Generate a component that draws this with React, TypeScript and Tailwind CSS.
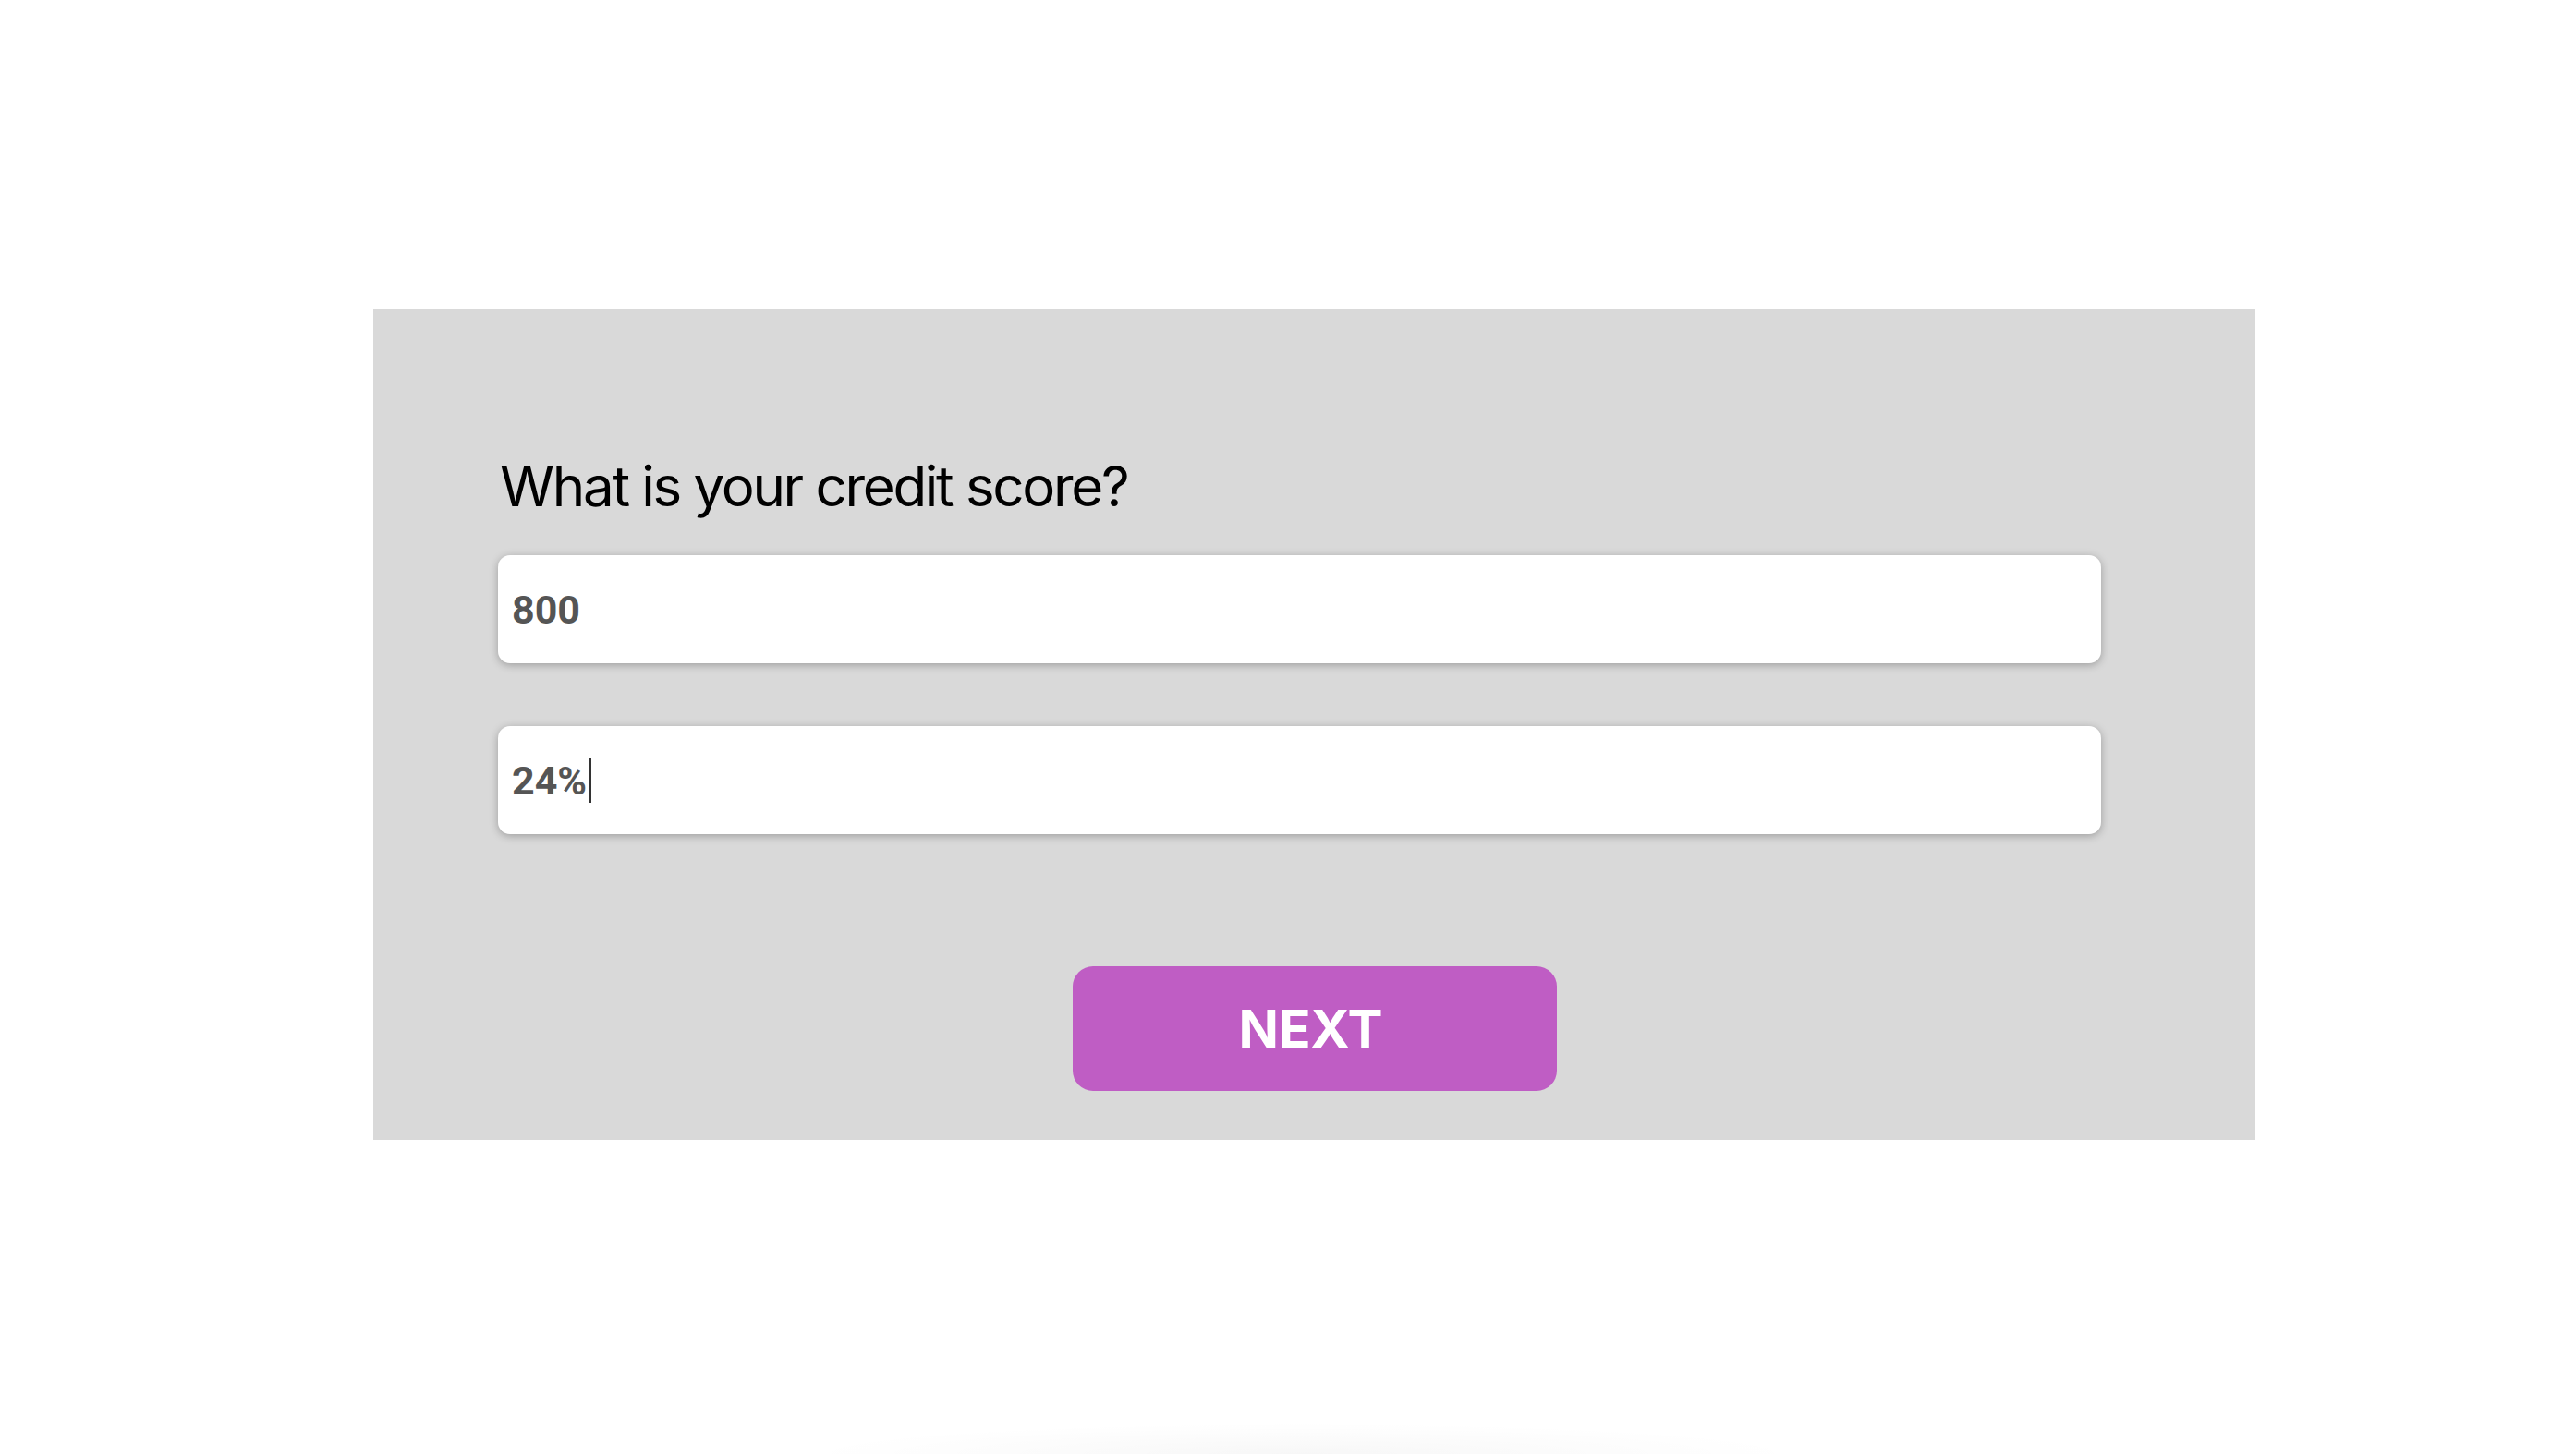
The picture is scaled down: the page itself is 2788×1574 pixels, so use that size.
import React, { useState } from 'react';

export default function App() {
  const [score, setScore] = useState('800');
  const [rate, setRate] = useState('24%');

  return (
    <div className="min-h-[1574px] w-full bg-white overflow-hidden">
      <div className="ml-[404px] mt-[334px] flex h-[900px] w-[2037px] flex-col bg-[#d9d9d9] pt-[156px]">
        <h1 className="ml-[137px] font-['Inter',sans-serif] text-[60px] font-normal leading-[72px] tracking-[-2.3px] text-black">
          What is your credit score?
        </h1>

        <input
          type="text"
          value={score}
          onChange={(e) => setScore(e.target.value)}
          className="ml-[135px] mt-[39px] h-[117px] w-[1735px] rounded-[13px] bg-white pl-[15px] font-['Roboto',sans-serif] text-[43px] font-bold text-[#555555] shadow-[0_2px_10px_rgba(0,0,0,0.28)] outline-none"
        />

        <div className="relative ml-[135px] mt-[68px] h-[117px] w-[1735px]">
          <input
            type="text"
            value={rate}
            onChange={(e) => setRate(e.target.value)}
            className="h-full w-full rounded-[13px] bg-white pl-[15px] font-['Roboto',sans-serif] text-[43px] font-bold text-[#555555] shadow-[0_2px_10px_rgba(0,0,0,0.28)] outline-none"
          />
          <span className="pointer-events-none absolute left-[99px] top-[35px] h-[48px] w-[2px] bg-[#333333]" />
        </div>

        <button
          type="button"
          className="mt-[143px] flex h-[135px] w-[524px] items-center justify-center self-center rounded-[22px] bg-[#bf5dc4] pr-[8px] font-['Inter',sans-serif] text-[57px] font-bold text-white"
        >
          NEXT
        </button>
      </div>

      <div className="ml-[860px] mt-[306px] h-[34px] w-[1100px] bg-[radial-gradient(ellipse_at_bottom,rgba(0,0,0,0.03),transparent_70%)]" />
    </div>
  );
}
